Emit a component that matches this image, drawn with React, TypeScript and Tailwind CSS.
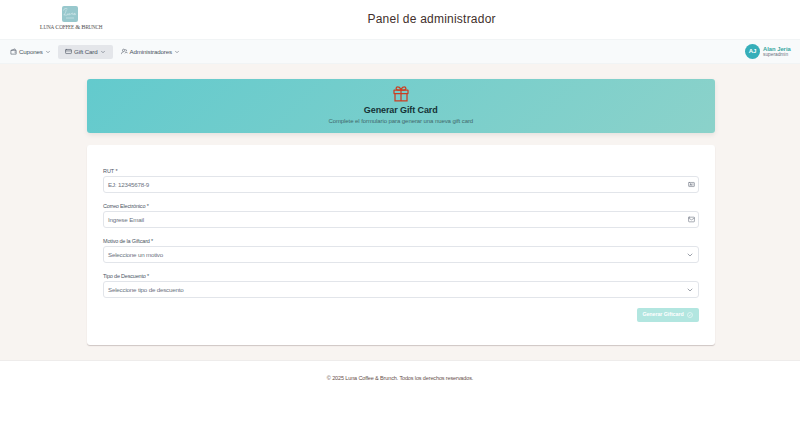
import React from "react";
import { ChevronDown, CreditCard, Mail, IdCard } from "lucide-react";

function TagIcon() {
  return (
    <svg className="h-[7px] w-[7px] shrink-0" viewBox="0 0 24 24" fill="none" stroke="currentColor" strokeWidth="2">
      <path d="M3 8h18v13H3zM4 8l13-5 2 5M15 14h6" />
    </svg>
  );
}

function AdminIcon() {
  return (
    <svg className="h-[7px] w-[7px] shrink-0" viewBox="0 0 24 24" fill="none" stroke="currentColor" strokeWidth="2">
      <circle cx="9" cy="8" r="4" />
      <path d="M1 21c0-5 3-7 7-7M15 5c5 0 5 6 1 7M13 18c3-4 8-4 10 0" />
    </svg>
  );
}

function GiftIcon() {
  return (
    <svg className="h-[16px] w-[16px] shrink-0 text-[#cb3e22]" viewBox="0 0 16 16" fill="none" stroke="currentColor" strokeWidth="1.250">
      <rect x="1" y="4" width="14" height="3.600" rx=".3" />
      <path d="M2 7.600v7.300h12V7.600M8 4v10.900M8 4H5.200C2.200 4 2.700.7 5 .8 6.800.8 7.500 2.400 8 4c.5-1.600 1.200-3.200 3-3.200 2.300-.1 2.800 3.200-.2 3.200z" />
    </svg>
  );
}

function ButtonIcon() {
  return (
    <svg className="ml-[3px] h-[6px] w-[6px] shrink-0" viewBox="0 0 24 24" fill="none" stroke="currentColor" strokeWidth="2">
      <circle cx="12" cy="12" r="10" />
      <path d="m8 12 3 3 5-6" />
    </svg>
  );
}

type FieldProps = {
  label: string;
  text: string;
  labelTracking: string;
  textTracking: string;
  icon: React.ReactNode;
};

function Field({ label, text, labelTracking, textTracking, icon }: FieldProps) {
  return (
    <div className="h-[35px]">
      <div className={`h-[9px] whitespace-nowrap text-[5.500px] leading-[8px] text-[#4b5563] ${labelTracking}`}>
        {label}
      </div>
      <div className="flex h-[17px] items-center justify-between rounded-[3px] border border-[#e2e5ea] bg-white pl-1 pr-[3px] text-[#6b7280]">
        <span className={`whitespace-nowrap text-[6.200px] leading-[8px] ${textTracking}`}>{text}</span>
        {icon}
      </div>
    </div>
  );
}

export default function App() {
  return (
    <div className="flex h-[423px] w-[800px] flex-col overflow-hidden bg-[#f8f4f1] font-['Liberation_Sans',Arial,sans-serif]">
      <header className="flex h-[39px] shrink-0 bg-white">
        <div className="flex w-[142px] shrink-0 flex-col items-center pt-[6px]">
          <svg className="mr-[3px] h-[16px] w-[16px]" viewBox="0 0 16 16" fill="none">
            <rect width="16" height="16" rx="2" fill="#98c8cd" />
            <path
              d="M1.500 4.500c0-2 3-2.700 4-1.500M4.200 3.500C4 6 3.200 7.500 1.800 9c1.200-.6 2.200.9 4.200-.5M6 7.300c-.7 2 .8 2 1.400.2-.3 1.700.3 1.600.9 1M8.800 8.800l.5-1.500c0 .8 1.600-.9 1.500.1l-.2 1.300M13 7.500c-1.300-.5-2 1.600-.8 1.300.6-.1.800-1.300.8-1.300s-.2 1.500 1 1.100M4 12h8"
              stroke="#dcedee"
              strokeWidth=".6"
            />
          </svg>
          <div className="mt-[1px] whitespace-nowrap font-['Liberation_Serif',serif] text-[6.500px] leading-[8px] tracking-[-0.270px] text-[#555354]">
            L<span className="text-[5.200px]">UNA</span> C<span className="text-[5.200px]">OFFEE</span> &amp; B
            <span className="text-[5.200px]">RUNCH</span>
          </div>
        </div>
        <h1 className="ml-[225.500px] mt-[12px] whitespace-nowrap text-[12px] leading-[15px] tracking-[0.220px] text-[#422f2c]">
          Panel de administrador
        </h1>
      </header>

      <nav className="flex h-[25px] shrink-0 items-center border-y border-[#f1f4f5] bg-[#f8fafb] pl-[3px] pr-[9px] text-[6.200px] text-[#4b5563]">
        <div className="flex h-[14px] w-[55px] items-center pl-[6.500px]">
          <TagIcon />
          <span className="ml-[2.500px] w-[23.500px] whitespace-nowrap tracking-[-0.150px]">Cupones</span>
          <ChevronDown className="ml-[2px] h-[6px] w-[6px]" />
        </div>
        <div className="flex h-[14px] w-[55px] items-center rounded-[2px] bg-[#e4e6ea] pl-[7px]">
          <CreditCard className="h-[7px] w-[7px]" />
          <span className="ml-[2px] w-[24px] whitespace-nowrap tracking-[-0.140px]">Gift Card</span>
          <ChevronDown className="ml-[2px] h-[6px] w-[6px]" />
        </div>
        <div className="flex h-[14px] items-center pl-[7.500px]">
          <AdminIcon />
          <span className="ml-[2px] w-[42.500px] whitespace-nowrap tracking-[-0.150px]">Administradores</span>
          <ChevronDown className="ml-[2px] h-[6px] w-[6px]" />
        </div>
        <div className="ml-auto flex items-center">
          <div className="flex h-[15px] w-[15px] items-center justify-center rounded-full bg-[#36aeb9] text-[6px] font-bold text-white">
            AJ
          </div>
          <div className="ml-[3px] w-[28px] whitespace-nowrap">
            <div className="text-[5.800px] font-bold leading-[6px] text-[#35a69f]">Alan Jeria</div>
            <div className="text-[4.800px] leading-[6px] text-[#6b7280]">superadmin</div>
          </div>
        </div>
      </nav>

      <main className="flex h-[296px] shrink-0 flex-col pl-[87px] pt-[15px]">
        <section className="flex h-[54px] w-[627.500px] shrink-0 flex-col items-center rounded-[3px] bg-linear-[135deg] from-[#63cacd] to-[#8bd2ca] pt-[7px] shadow-[0_2px_5px_rgba(0,0,0,0.08)]">
          <GiftIcon />
          <h2 className="mt-[3px] whitespace-nowrap text-[9px] font-bold leading-[10px] tracking-[-0.100px] text-[#153235]">
            Generar Gift Card
          </h2>
          <p className="mt-[2px] whitespace-nowrap text-[6px] leading-[8px] tracking-[-0.080px] text-[#42696b]">
            Complete el formulario para generar una nueva gift card
          </p>
        </section>

        <section className="mt-[12px] h-[200px] w-[627.500px] shrink-0 rounded-[3px] bg-white px-4 pt-[22px] shadow-[0_1px_1px_rgba(60,30,35,0.22)]">
          <Field label="RUT *" text="EJ: 12345678-9" labelTracking="tracking-[-0.080px]" textTracking="tracking-[-0.190px]" icon={<IdCard className="h-[7px] w-[7px]" />} />
          <Field label="Correo Electrónico *" text="Ingrese Email" labelTracking="tracking-[-0.180px]" textTracking="tracking-[-0.150px]" icon={<Mail className="h-[7px] w-[7px]" />} />
          <Field label="Motivo de la Giftcard *" text="Seleccione un motivo" labelTracking="tracking-[-0.180px]" textTracking="tracking-[-0.190px]" icon={<ChevronDown className="mr-[1px] h-[8px] w-[8px]" />} />
          <Field label="Tipo de Descuento *" text="Seleccione tipo de descuento" labelTracking="tracking-[-0.200px]" textTracking="tracking-[-0.190px]" icon={<ChevronDown className="mr-[1px] h-[8px] w-[8px]" />} />
          <div className="flex justify-end pt-[1px]">
            <button className="flex h-[14px] w-[62px] items-center justify-center rounded-[2px] bg-[#b2e6e0] text-[5.300px] font-bold text-white">
              <span className="whitespace-nowrap tracking-[-0.060px]">Generar Giftcard</span>
              <ButtonIcon />
            </button>
          </div>
        </section>
      </main>

      <footer className="flex flex-1 justify-center border-t border-[#eeeceb] bg-white pt-[13px] text-[5.500px] leading-[8px] text-[#66504a]">
        <span className="whitespace-nowrap tracking-[-0.130px]">© 2025 Luna Coffee &amp; Brunch. Todos los derechos reservados.</span>
      </footer>
    </div>
  );
}
